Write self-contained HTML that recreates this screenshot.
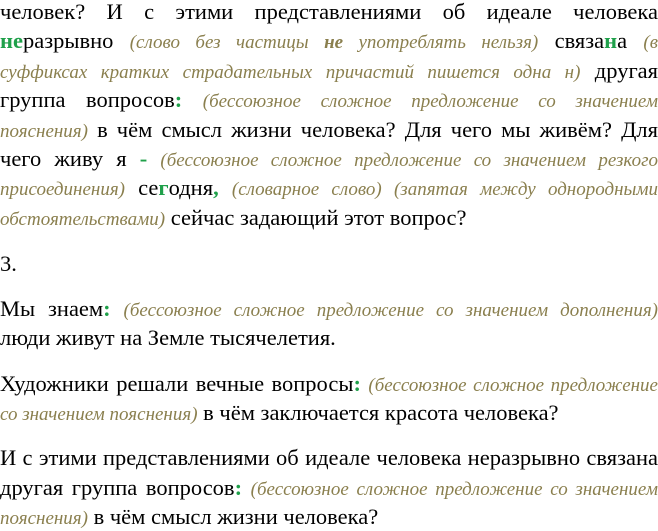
<!DOCTYPE html>
<html><head><meta charset="utf-8"><style>
html,body{margin:0;padding:0;background:#fff}
body{width:658px;height:527px;overflow:hidden;font-family:"Liberation Serif",serif;font-size:22.5px;color:#000}
p{margin:0 0 15.8px 0;line-height:29.4px;text-align:justify}
p:first-child{margin-top:-3px;margin-bottom:16.5px}
i{color:#8a7f4e;font-size:19px;line-height:1}
.g{color:#1fa04a;font-weight:bold}
</style></head><body>
<p>человек? И с этими представлениями об идеале человека <span class="g">не</span>разрывно <i>(слово без частицы <b>не</b> употреблять нельзя)</i> связа<span class="g">н</span>а <i>(в суффиксах кратких страдательных причастий пишется одна н)</i> другая группа вопросов<span class="g">:</span> <i>(бессоюзное сложное предложение со значением пояснения)</i> в чём смысл жизни человека? Для чего мы живём? Для чего живу я <span class="g">-</span> <i>(бессоюзное сложное предложение со значением резкого присоединения)</i> се<span class="g">г</span>одня<span class="g">,</span> <i>(словарное слово) (запятая между однородными обстоятельствами)</i> сейчас задающий этот вопрос?</p>
<p>3.</p>
<p>Мы знаем<span class="g">:</span> <i>(бессоюзное сложное предложение со значением дополнения)</i> люди живут на Земле тысячелетия.</p>
<p>Художники решали вечные вопросы<span class="g">:</span> <i>(бессоюзное сложное предложение со значением пояснения)</i> в чём заключается красота человека?</p>
<p>И с этими представлениями об идеале человека неразрывно связана другая группа вопросов<span class="g">:</span> <i>(бессоюзное сложное предложение со значением пояснения)</i> в чём смысл жизни человека?</p>
</body></html>
